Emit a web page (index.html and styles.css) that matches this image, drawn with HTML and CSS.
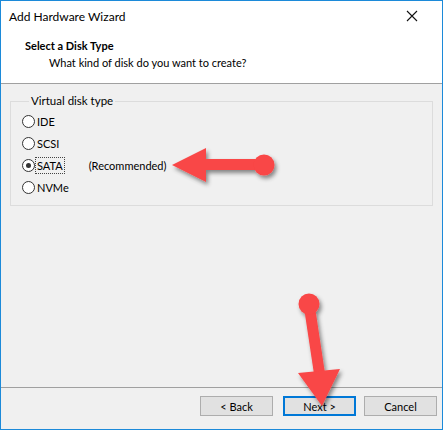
FILE: index.html
```html
<!DOCTYPE html>
<html lang="en">
<head>
    <meta charset="UTF-8">
    <title>Add Hardware Wizard</title>
    <link rel="stylesheet" href="styles.css">
</head>
<body>
<div class="window">
    <div class="top">
        <div class="titlebar">
            <span class="title">Add Hardware Wizard</span>
            <span class="close">
                <svg width="12" height="12" viewBox="0 0 12 12"><path d="M1 1L11 11M11 1L1 11" stroke="#111" stroke-width="1.1"/></svg>
            </span>
        </div>
        <div class="header">
            <h1 class="step">Select a Disk Type</h1>
            <p class="question">What kind of disk do you want to create?</p>
        </div>
    </div>

    <div class="content">
        <fieldset class="group">
            <legend>Virtual disk type</legend>
            <div class="option"><span class="radio"></span><span class="label">IDE</span></div>
            <div class="option"><span class="radio"></span><span class="label">SCSI</span></div>
            <div class="option"><span class="radio checked"></span><span class="label focus">SATA</span><span class="note">(Recommended)</span></div>
            <div class="option"><span class="radio"></span><span class="label">NVMe</span></div>
        </fieldset>
    </div>

    <div class="footer">
        <button class="btn">&lt; Back</button>
        <button class="btn default">Next &gt;</button>
        <button class="btn cancel">Cancel</button>
    </div>

    <svg class="marks" width="443" height="430" viewBox="0 0 443 430">
        <defs>
            <filter id="shade" x="-20%" y="-20%" width="140%" height="140%">
                <feDropShadow dx="2" dy="3" stdDeviation="2" flood-color="#000" flood-opacity="0.45"/>
            </filter>
        </defs>
        <g fill="#f94646" filter="url(#shade)">
            <rect x="200" y="158" width="63" height="11"/>
            <polygon points="171,164 205,147 205,181"/>
            <circle cx="263" cy="164" r="10.5"/>
        </g>
        <g fill="#f94646" filter="url(#shade)">
            <line x1="308" y1="303" x2="319" y2="376" stroke="#f94646" stroke-width="11"/>
            <polygon points="297,372 339,368 321,405"/>
            <circle cx="308" cy="303" r="10.5"/>
        </g>
    </svg>
</div>
</body>
</html>
```

FILE: styles.css
```css
body {
    margin: 0;
    padding: 0;
    font-family: Lato, "Liberation Sans", sans-serif;
    font-size: 11px;
    color: #000;
    background: #fff;
}

.window {
    position: relative;
    width: 441px;
    height: 428px;
    border: 1px solid #1c8ad9;
    background: #f0f0f0;
    display: flex;
    flex-direction: column;
}

.top {
    background: #fff;
    height: 82px;
    border-bottom: 1px solid #a0a0a0;
}

.titlebar {
    height: 30px;
    display: flex;
    align-items: center;
    justify-content: space-between;
    padding: 0 24px 0 8px;
}

.title {
    font-size: 12px;
}

.close {
    display: flex;
}

.header {
    padding-left: 24px;
}

.step {
    margin: 7px 0 0 0;
    font-size: 11px;
    font-weight: bold;
    line-height: 16px;
}

.question {
    margin: 1px 0 0 24px;
    line-height: 16px;
}

.content {
    flex: 1;
    padding: 10px 9px 0 9px;
}

.group {
    margin: 0;
    padding: 2px 0 7px 11px;
    border: 1px solid #dcdcdc;
    min-inline-size: 0;
}

.group legend {
    margin-left: 7px;
    padding: 0 2px;
    line-height: 14px;
    font-size: 11.5px;
}

.option {
    display: flex;
    align-items: center;
    height: 22px;
}

.radio {
    width: 11px;
    height: 11px;
    border: 1px solid #333;
    border-radius: 50%;
    background: #fff;
    display: flex;
    align-items: center;
    justify-content: center;
}

.radio.checked::after {
    content: "";
    width: 5px;
    height: 5px;
    border-radius: 50%;
    background: #333;
}

.label {
    padding: 0 1px;
    border: 1px dotted transparent;
    line-height: 15px;
}

.label.focus {
    border-color: #444;
}

.note {
    margin-left: 24px;
}

.footer {
    height: 33px;
    border-top: 1px solid #a0a0a0;
    display: flex;
    justify-content: flex-end;
    align-items: flex-start;
    padding: 8px 5px 0 0;
}

.btn {
    font-family: inherit;
    font-size: 11px;
    width: 73px;
    height: 20px;
    padding: 0;
    background: #e1e1e1;
    border: 1px solid #adadad;
    color: #000;
    margin-left: 10px;
}

.btn.default {
    border: 2px solid #0078d7;
}

.btn.cancel {
    margin-left: 8px;
}

.marks {
    position: absolute;
    left: 0;
    top: 0;
    pointer-events: none;
}
```
